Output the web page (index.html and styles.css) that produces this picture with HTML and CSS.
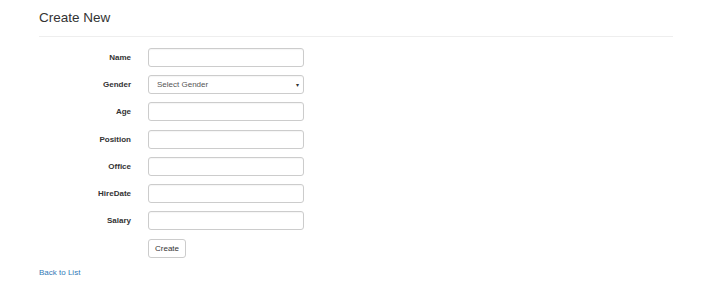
FILE: index.html
```html
<!DOCTYPE html>
<html lang="en">
<head>
    <meta charset="UTF-8">
    <title>Create New</title>
    <link rel="stylesheet" href="styles.css">
</head>
<body>
    <div class="container">
        <h2 class="title">Create New</h2>
        <hr class="divider">

        <form class="form-horizontal" onsubmit="return false;">
            <div class="form-group">
                <label class="control-label" for="name">Name</label>
                <input class="form-control" id="name" type="text">
            </div>
            <div class="form-group">
                <label class="control-label" for="gender">Gender</label>
                <div class="form-control select-box" id="gender">
                    <span>Select Gender</span>
                    <span class="caret">&#9662;</span>
                </div>
            </div>
            <div class="form-group">
                <label class="control-label" for="age">Age</label>
                <input class="form-control" id="age" type="text">
            </div>
            <div class="form-group">
                <label class="control-label" for="position">Position</label>
                <input class="form-control" id="position" type="text">
            </div>
            <div class="form-group">
                <label class="control-label" for="office">Office</label>
                <input class="form-control" id="office" type="text">
            </div>
            <div class="form-group">
                <label class="control-label" for="hiredate">HireDate</label>
                <input class="form-control" id="hiredate" type="text">
            </div>
            <div class="form-group">
                <label class="control-label" for="salary">Salary</label>
                <input class="form-control" id="salary" type="text">
            </div>
            <div class="form-group form-actions">
                <span class="control-label"></span>
                <button class="btn" type="submit">Create</button>
            </div>
        </form>

        <a class="back-link" href="#">Back to List</a>
    </div>
</body>
</html>
```

FILE: styles.css
```css
body {
    margin: 0;
    background-color: #fff;
    font-family: "Liberation Sans", Arial, sans-serif;
    color: #333;
}
.container {
    width: 634px;
    padding-left: 39px;
}
.title {
    margin: 10px 0 0;
    font-size: 13.5px;
    line-height: 15px;
    font-weight: normal;
    color: #333;
}
.divider {
    margin: 11px 0 11px;
    border: 0;
    border-top: 1px solid #eee;
}
.form-group {
    display: flex;
    align-items: center;
    margin-bottom: 8.2px;
}
.control-label {
    width: 92px;
    padding-right: 17px;
    text-align: right;
    font-size: 8px;
    font-weight: bold;
    color: #333;
}
.form-control {
    box-sizing: border-box;
    width: 156px;
    height: 19px;
    margin: 0;
    padding: 0 8px;
    border: 1px solid #ccc;
    border-radius: 3px;
    background-color: #fff;
    font-family: inherit;
    font-size: 8px;
    color: #555;
    box-shadow: inset 0 1px 1px rgba(0,0,0,0.04);
}
.select-box {
    display: flex;
    align-items: center;
    justify-content: space-between;
    padding-right: 4px;
}
.caret {
    font-size: 6px;
    color: #333;
}
.form-actions {
    margin-top: 9px;
}
.btn {
    box-sizing: border-box;
    height: 19px;
    width: 38px;
    padding: 0;
    border: 1px solid #ccc;
    border-radius: 3px;
    background-color: #fff;
    font-family: inherit;
    font-size: 8px;
    color: #333;
}
.back-link {
    display: block;
    margin-top: 9px;
    font-size: 8px;
    line-height: 11px;
    color: #337ab7;
    text-decoration: none;
}
```
